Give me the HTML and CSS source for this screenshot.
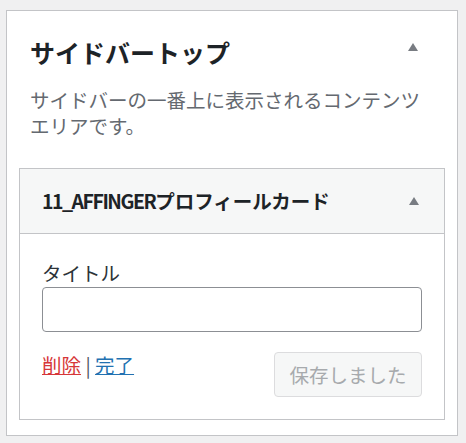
FILE: index.html
```html
<!DOCTYPE html>
<html lang="ja">
<head>
<meta charset="utf-8">
<link rel="stylesheet" href="styles.css">
</head>
<body>
<div class="panel">
  <div class="section-head">
    <h3 class="section-title">サイドバートップ</h3>
    <span class="arrow arrow-outer"></span>
  </div>
  <p class="section-desc">サイドバーの一番上に表示されるコンテンツエリアです。</p>
  <div class="widget">
    <div class="widget-head">
      <h4 class="widget-title"><span class="latin">11_AFFINGER</span>プロフィールカード</h4>
      <span class="arrow"></span>
    </div>
    <div class="widget-body">
      <label class="field-label" for="title">タイトル</label>
      <input class="field-input" id="title" type="text">
      <div class="actions">
        <div class="links"><a class="link-delete" href="#">削除</a> | <a class="link-done" href="#">完了</a></div>
        <button class="save-btn" type="button" disabled>保存しました</button>
      </div>
    </div>
  </div>
</div>
</body>
</html>
```
FILE: styles.css
```css
html, body {
  margin: 0;
  padding: 0;
  background: #f0f0f1;
}
body {
  font-family: "Noto Sans CJK JP", "Noto Sans", sans-serif;
  color: #1d2327;
}
.panel {
  box-sizing: border-box;
  width: 452px;
  margin: 10px 0 0 6px;
  height: 426px;
  background: #fff;
  border: 1px solid #c3c4c7;
  padding: 25px 12px 15px 12px;
}
.section-head {
  display: flex;
  justify-content: space-between;
  align-items: flex-start;
  padding: 0 27px 0 11px;
}
.section-title {
  margin: 0;
  font-size: 25px;
  line-height: 32px;
  font-weight: 700;
  color: #1d2327;
}
.arrow {
  width: 0;
  height: 0;
  border-left: 5.5px solid transparent;
  border-right: 5.5px solid transparent;
  border-bottom: 8px solid #787c82;
}
.arrow-outer {
  margin-top: 7px;
}
.section-desc {
  margin: 19px 0 29px 0;
  padding: 0 20px 0 11px;
  font-size: 19.5px;
  line-height: 26px;
  color: #646970;
}
.widget {
  border: 1px solid #c3c4c7;
  background: #fff;
}
.widget-head {
  display: flex;
  justify-content: space-between;
  align-items: center;
  height: 64px;
  padding: 0 25px 0 22px;
  background: #f6f7f7;
  border-bottom: 1px solid #c3c4c7;
}
.widget-title {
  margin: 0;
  font-size: 19.5px;
  font-weight: 700;
  line-height: 26px;
  color: #1d2327;
}
.latin {
  letter-spacing: -1.5px;
}
.widget-body {
  padding: 26px 22px 22px 22px;
}
.field-label {
  display: block;
  font-size: 19.5px;
  line-height: 26px;
  color: #2c3338;
}
.field-input {
  display: block;
  box-sizing: border-box;
  width: 100%;
  height: 45px;
  margin: 1px 0 0 0;
  border: 1px solid #8c8f94;
  border-radius: 4px;
  background: #fff;
}
.actions {
  display: flex;
  justify-content: space-between;
  align-items: flex-start;
  margin-top: 20px;
}
.links {
  font-size: 19.5px;
  line-height: 26px;
  color: #50575e;
}
.link-delete {
  color: #d63638;
}
.link-done {
  color: #2271b1;
}
.save-btn {
  box-sizing: border-box;
  width: 148px;
  height: 45px;
  padding: 0;
  font-family: "Noto Sans CJK JP", "Noto Sans", sans-serif;
  font-size: 19.5px;
  color: #a7aaad;
  background: #f6f7f7;
  border: 1px solid #dcdcde;
  border-radius: 4px;
}
```
